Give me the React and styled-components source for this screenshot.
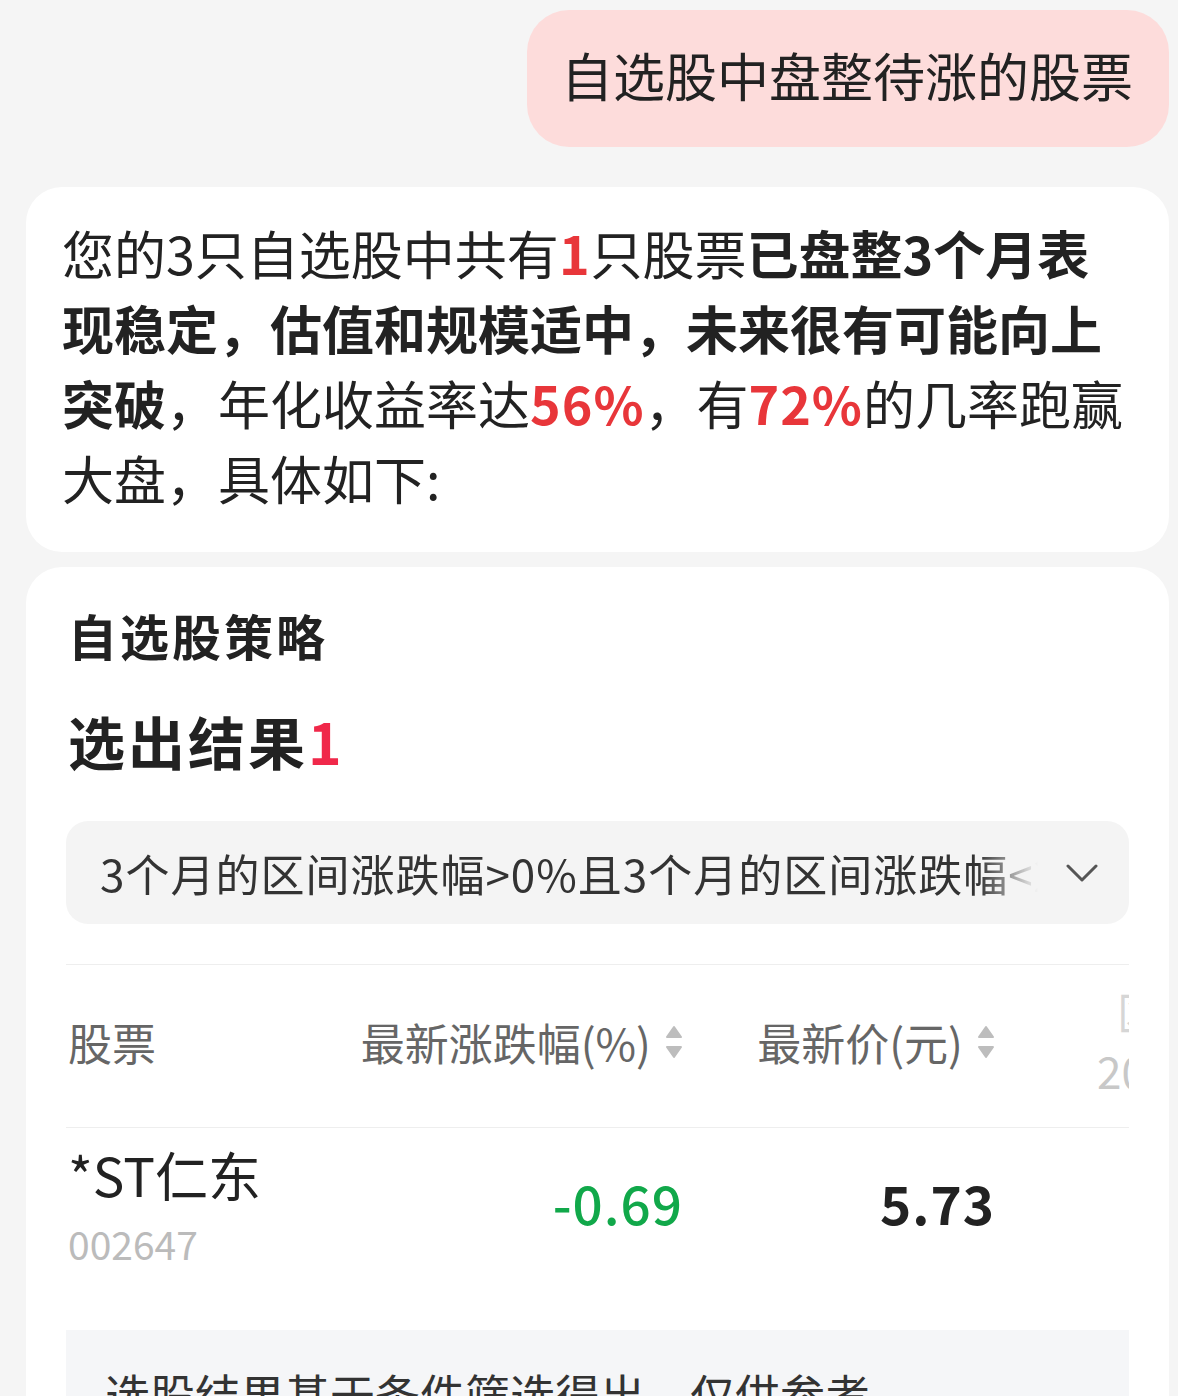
import React from "react";
import styled, { createGlobalStyle } from "styled-components";

const GlobalStyle = createGlobalStyle`
  html, body {
    margin: 0;
    background: #f5f5f5;
  }
  body {
    font-family: "Noto Sans CJK SC", "Noto Sans", sans-serif;
    color: #222;
  }
`;

const columns = [
  { key: "name", title: "股票", width: 293 },
  { key: "change", title: "最新涨跌幅(%)", width: 324, sortable: true, align: "right" },
  { key: "price", title: "最新价(元)", width: 312, sortable: true, align: "right" },
];

const stocks = [{ name: "*ST仁东", code: "002647", change: "-0.69", price: "5.73" }];

export default function App() {
  return (
    <>
      <GlobalStyle />
      <Page>
        <Bubble>自选股中盘整待涨的股票</Bubble>

        <Card>
          <Summary>
            您的3只自选股中共有<Red>1</Red>只股票<Strong>已盘整3个月表现稳定，估值和规模适中，未来很有可能向上突破</Strong>，年化收益率达<Red>56%</Red>，有<Red>72%</Red>的几率跑赢大盘，具体如下:
          </Summary>
        </Card>

        <StrategyCard>
          <StrategyTitle>自选股策略</StrategyTitle>
          <ResultTitle>
            选出结果<Count>1</Count>
          </ResultTitle>

          <FilterBox>
            <FilterText>3个月的区间涨跌幅&gt;0%且3个月的区间涨跌幅&lt;20%且市值适中</FilterText>
            <Chevron />
          </FilterBox>

          <Table>
            <HeaderRow>
              {columns.map((col) => (
                <HeaderCell key={col.key} $width={col.width} $align={col.align}>
                  {col.title}
                  {col.sortable && <SortIcon />}
                </HeaderCell>
              ))}
              <ExtraHeader>
                <ExtraTitle>区间涨跌幅(%)</ExtraTitle>
                <span>20230906-20231206</span>
              </ExtraHeader>
            </HeaderRow>

            {stocks.map((s) => (
              <DataRow key={s.code}>
                <NameCell $width={293}>
                  <StockName>{s.name}</StockName>
                  <StockCode>{s.code}</StockCode>
                </NameCell>
                <NumCell $width={324} $color="#11a84a" $weight={500}>
                  {s.change}
                </NumCell>
                <NumCell $width={312} $color="#222" $weight={700}>
                  {s.price}
                </NumCell>
              </DataRow>
            ))}
          </Table>

          <Disclaimer>选股结果基于条件筛选得出，仅供参考</Disclaimer>
        </StrategyCard>
      </Page>
    </>
  );
}

function SortIcon() {
  return (
    <SortSvg width="18" height="34" viewBox="0 0 18 34">
      <path d="M9 2 L16 12 H2 Z" fill="#bdbdbd" stroke="#bdbdbd" strokeWidth="2" strokeLinejoin="round" />
      <path d="M9 32 L16 22 H2 Z" fill="#bdbdbd" stroke="#bdbdbd" strokeWidth="2" strokeLinejoin="round" />
    </SortSvg>
  );
}

function Chevron() {
  return (
    <ChevronSvg width="32" height="18" viewBox="0 0 32 18">
      <polyline points="2,2 16,16 30,2" fill="none" stroke="#555" strokeWidth="3" strokeLinecap="round" strokeLinejoin="round" />
    </ChevronSvg>
  );
}

const Page = styled.div`
  display: flex;
  flex-direction: column;
  padding: 10px 9px 0 26px;
`;

const Bubble = styled.div`
  align-self: flex-end;
  box-sizing: border-box;
  height: 137px;
  display: flex;
  align-items: center;
  padding: 0 36px 8px 34px;
  background: #fddcdb;
  border-radius: 42px;
  font-size: 52px;
  color: #222;
`;

const Card = styled.div`
  margin-top: 40px;
  background: #fff;
  border-radius: 36px;
`;

const Summary = styled.p`
  margin: 0;
  padding: 28px 40px 37px 36px;
  font-size: 52px;
  line-height: 75px;
  color: #222;
`;

const Strong = styled.b`
  font-weight: 700;
`;

const Red = styled.span`
  color: #e8363a;
  font-weight: 700;
  letter-spacing: 1px;
`;

const StrategyCard = styled(Card)`
  margin-top: 15px;
  padding: 33px 40px 60px;
  border-radius: 36px 36px 0 0;
`;

const StrategyTitle = styled.h2`
  margin: 0;
  font-size: 49px;
  line-height: 70px;
  font-weight: 700;
  letter-spacing: 3px;
  color: #222;
  padding-left: 2px;
`;

const ResultTitle = styled.h1`
  margin: 30px 0 0;
  font-size: 57px;
  line-height: 80px;
  font-weight: 700;
  letter-spacing: 3px;
  color: #222;
  padding-left: 2px;
`;

const Count = styled.span`
  color: #f0284a;
`;

const FilterBox = styled.div`
  margin-top: 41px;
  height: 103px;
  display: flex;
  align-items: center;
  padding: 0 31px 0 34px;
  background: #f4f4f4;
  border-radius: 22px;
`;

const FilterText = styled.div`
  flex: 1;
  min-width: 0;
  overflow: hidden;
  white-space: nowrap;
  font-size: 44px;
  letter-spacing: 1px;
  color: #333;
  -webkit-mask-image: linear-gradient(to right, #000 calc(100% - 60px), transparent);
  mask-image: linear-gradient(to right, #000 calc(100% - 60px), transparent);
`;

const ChevronSvg = styled.svg`
  flex: none;
  margin-left: 28px;
`;

const Table = styled.div`
  margin-top: 40px;
  border-top: 1px solid #eee;
  overflow: hidden;
`;

const HeaderRow = styled.div`
  display: flex;
  height: 162px;
  border-bottom: 1px solid #eee;
`;

const HeaderCell = styled.div`
  flex: none;
  width: ${(p) => p.$width}px;
  display: flex;
  align-items: center;
  justify-content: ${(p) => (p.$align === "right" ? "flex-end" : "flex-start")};
  padding-bottom: 8px;
  font-size: 44px;
  color: #666;
  white-space: nowrap;
  padding-left: ${(p) => (p.$align === "right" ? 0 : 2)}px;
  box-sizing: border-box;
`;

const SortSvg = styled.svg`
  flex: none;
  margin-left: 14px;
`;

const ExtraHeader = styled.div`
  flex: none;
  display: flex;
  flex-direction: column;
  justify-content: center;
  padding: 0 0 10px 102px;
  font-size: 44px;
  line-height: 59px;
  color: #c8c8c8;
  white-space: nowrap;
`;

const ExtraTitle = styled.span`
  padding-left: 20px;
  color: #d6d6d6;
`;

const DataRow = styled.div`
  display: flex;
  height: 166px;
  align-items: center;
`;

const NameCell = styled.div`
  flex: none;
  width: ${(p) => p.$width}px;
  display: flex;
  flex-direction: column;
  padding: 0 0 6px 2px;
  box-sizing: border-box;
`;

const StockName = styled.span`
  font-size: 53px;
  line-height: 70px;
  color: #222;
`;

const StockCode = styled.span`
  font-size: 39px;
  line-height: 68px;
  color: #bbb;
`;

const NumCell = styled.div`
  flex: none;
  width: ${(p) => p.$width}px;
  text-align: right;
  font-size: 53px;
  line-height: 70px;
  letter-spacing: 1px;
  margin-bottom: 18px;
  font-weight: ${(p) => p.$weight};
  color: ${(p) => p.$color};
`;

const Disclaimer = styled.div`
  margin-top: 36px;
  padding: 32px 39px 60px;
  background: #f5f6f8;
  font-size: 45px;
  line-height: 64px;
  color: #333;
`;
